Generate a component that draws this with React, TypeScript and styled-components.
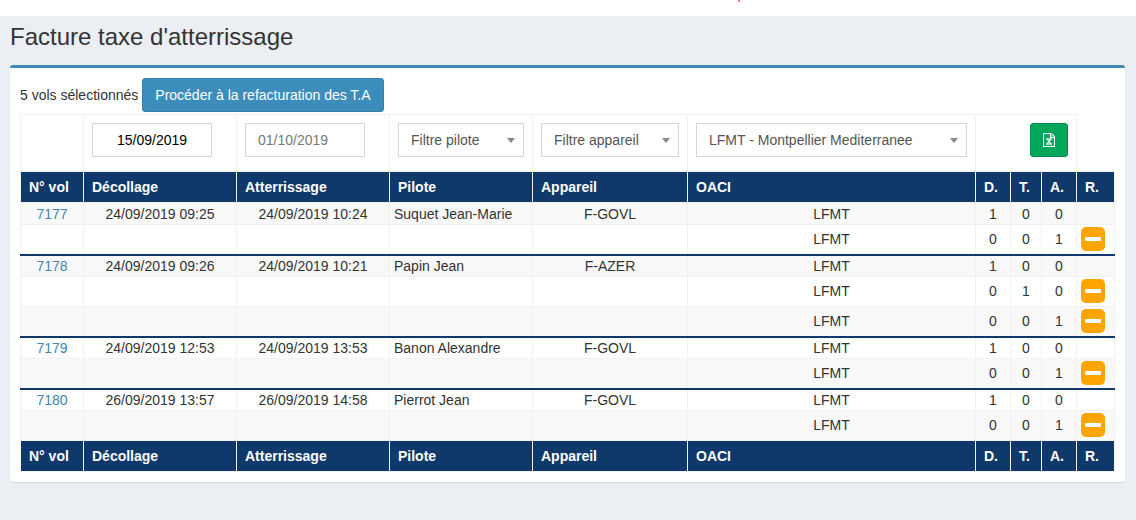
import React from "react";
import styled, { createGlobalStyle } from "styled-components";

const navy = "#0f386b";
const line = "#f1f1f1";

const GlobalStyle = createGlobalStyle`
  *, *::before, *::after { box-sizing: border-box; }
  body {
    margin: 0;
    background: #ebeef3;
    color: #333;
    font: 14px/20px "Liberation Sans", Arial, sans-serif;
  }
`;

const TopBar = styled.header`
  display: flex;
  justify-content: center;
  height: 16px;
  padding-left: 341px;
  background: #fff;
`;

const Mark = styled.span`
  width: 2px;
  height: 2px;
  border-radius: 1px;
  background: #e0525e;
`;

const Content = styled.main`
  padding: 8px 11px 20px 10px;
`;

const Title = styled.h1`
  margin: 0 0 15px;
  font-size: 24px;
  line-height: 26px;
  font-weight: 400;
`;

const Box = styled.section`
  padding: 10px;
  border-top: 3px solid #4089b7;
  border-radius: 3px;
  background: #fff;
  box-shadow: 0 1px 1px rgba(0, 0, 0, 0.1);
`;

const Summary = styled.div`
  display: flex;
  align-items: baseline;
  gap: 4px;
  margin-bottom: 2px;
`;

const Button = styled.button<{ $tone: "primary" | "success" }>`
  height: 34px;
  padding: 0 12px;
  border: 1px solid ${(p) => (p.$tone === "primary" ? "#367fa9" : "#008d4c")};
  border-radius: 3px;
  background: ${(p) => (p.$tone === "primary" ? "#3c8dbc" : "#00a65a")};
  color: #fff;
  font: inherit;
  cursor: pointer;

  svg { display: block; }
`;

const Table = styled.table`
  width: 100%;
  table-layout: fixed;
  border-collapse: collapse;
`;

const Col = styled.col<{ $w?: number }>`
  width: ${(p) => (p.$w ? `${p.$w}px` : "auto")};
`;

const FilterCell = styled.td`
  padding: 8px 8px 14px;
  border: 1px solid ${line};
  text-align: left;
`;

const ActionCell = styled(FilterCell)`
  text-align: right;

  ${Button} { display: inline-block; vertical-align: top; }
`;

const HeadCell = styled.th`
  padding: 5px 8px;
  border: 1px solid ${line};
  background: ${navy};
  color: #fff;
  text-align: left;
  font-weight: 700;
`;

const Cell = styled.td<{ $left?: boolean }>`
  padding: 0 4px;
  border-left: 1px solid ${line};
  border-right: 1px solid ${line};
  text-align: ${(p) => (p.$left ? "left" : "center")};
`;

const IconCell = styled(Cell)``;

const Row = styled.tr<{ $group: boolean }>`
  &:nth-child(odd) { background: #f9f9f9; }
  border-top: ${(p) => (p.$group ? `2px solid ${navy}` : `1px solid ${line}`)};

  ${Cell} { padding-bottom: ${(p) => (p.$group ? 0 : 2)}px; }
  ${IconCell} { padding: ${(p) => (p.$group ? "0 4px" : "2px 4px 3px")}; }

  &:first-child { border-top: 1px solid ${line}; }
  &:first-child td { padding-top: 1px; }
`;

const FlightLink = styled.a`
  color: #4585ac;
  text-decoration: none;
`;

const DateInput = styled.input<{ $centered?: boolean }>`
  display: block;
  width: 120px;
  height: 34px;
  padding: 0 12px;
  border: 1px solid #d2d6de;
  border-radius: 0;
  background: #fff;
  color: #000;
  font: inherit;
  text-align: ${(p) => (p.$centered ? "center" : "left")};

  &::placeholder { color: #777; opacity: 1; }
`;

const SelectWrap = styled.div`
  position: relative;

  svg {
    position: absolute;
    top: 15px;
    right: 9px;
    pointer-events: none;
  }
`;

const Select = styled.select`
  display: block;
  appearance: none;
  width: 100%;
  height: 34px;
  padding: 0 20px 0 12px;
  border: 1px solid #d2d6de;
  border-radius: 0;
  background: #fff;
  color: #555;
  font: inherit;
`;

const RemoveButton = styled.button`
  display: flex;
  align-items: center;
  justify-content: center;
  width: 24px;
  height: 24px;
  padding: 0;
  border: 0;
  border-radius: 5px;
  background: #ffa500;
  cursor: pointer;
`;

const ExcelIcon = () => (
  <svg width="12" height="14" viewBox="0 0 1536 1792" fill="currentColor" stroke="currentColor" aria-hidden="true">
    <path strokeWidth="24" d="M1468 380q28 28 48 76t20 88v1152q0 40-28 68t-68 28h-1344q-40 0-68-28t-28-68v-1600q0-40 28-68t68-28h896q40 0 88 20t76 48zm-444-244v376h376q-10-29-22-41l-313-313q-12-12-41-22zm384 1528v-1024h-416q-40 0-68-28t-28-68v-416h-768v1536h1280z" />
    <path strokeWidth="60" d="M429 1361v106h281v-106h-75l103-161q5-7 10-16.500t7.500-13.500 3.500-4h2q1 4 5 10 2 4 4.500 7.500t6 8 6.500 8.500l107 161h-76v106h291v-106h-68l-192-273 195-282h67v-107h-279v107h74l-103 159q-4 7-10 16.500t-9 13.500l-2 3h-2q-1-4-5-10-6-11-17-23l-106-159h76v-107h-290v107h68l189 272-194 283h-68z" />
  </svg>
);

const MinusIcon = () => (
  <svg width="16" height="4" viewBox="0 0 16 4" aria-hidden="true">
    <rect width="16" height="4" rx="1" fill="#fff" />
  </svg>
);

const Filter = ({ label, options }: { label: string; options: string[] }) => (
  <SelectWrap>
    <Select aria-label={label}>
      {options.map((o) => (
        <option key={o}>{o}</option>
      ))}
    </Select>
    <svg width="8" height="5" viewBox="0 0 8 5" aria-hidden="true">
      <path d="M0 0h8L4 5z" fill="#888" />
    </svg>
  </SelectWrap>
);

const headings = ["N° vol", "Décollage", "Atterrissage", "Pilote", "Appareil", "OACI", "D.", "T.", "A.", "R."];
const widths = [63, 153, 153, 143, 155, undefined, 35, 31, 35, 38];

const HeadingRow = () => (
  <tr>
    {headings.map((h) => (
      <HeadCell key={h} scope="col">{h}</HeadCell>
    ))}
  </tr>
);

interface Flight {
  id: string;
  takeoff: string;
  landing: string;
  pilot: string;
  aircraft: string;
  movements: number[][];
}

const flights: Flight[] = [
  { id: "7177", takeoff: "24/09/2019 09:25", landing: "24/09/2019 10:24", pilot: "Suquet Jean-Marie", aircraft: "F-GOVL", movements: [[1, 0, 0], [0, 0, 1]] },
  { id: "7178", takeoff: "24/09/2019 09:26", landing: "24/09/2019 10:21", pilot: "Papin Jean", aircraft: "F-AZER", movements: [[1, 0, 0], [0, 1, 0], [0, 0, 1]] },
  { id: "7179", takeoff: "24/09/2019 12:53", landing: "24/09/2019 13:53", pilot: "Banon Alexandre", aircraft: "F-GOVL", movements: [[1, 0, 0], [0, 0, 1]] },
  { id: "7180", takeoff: "26/09/2019 13:57", landing: "26/09/2019 14:58", pilot: "Pierrot Jean", aircraft: "F-GOVL", movements: [[1, 0, 0], [0, 0, 1]] },
];

export default function App() {
  return (
    <>
      <GlobalStyle />
      <TopBar><Mark /></TopBar>
      <Content>
        <Title>Facture taxe d'atterrissage</Title>
        <Box>
          <Summary>
            <span>5 vols sélectionnés</span>
            <Button $tone="primary" type="button">Procéder à la refacturation des T.A</Button>
          </Summary>
          <Table>
            <colgroup>
              {widths.map((w, i) => (
                <Col key={i} $w={w} />
              ))}
            </colgroup>
            <thead>
              <tr>
                <FilterCell />
                <FilterCell>
                  <DateInput $centered aria-label="Décollage" defaultValue="15/09/2019" />
                </FilterCell>
                <FilterCell>
                  <DateInput aria-label="Atterrissage" placeholder="01/10/2019" />
                </FilterCell>
                <FilterCell>
                  <Filter label="Pilote" options={["Filtre pilote", ...flights.map((f) => f.pilot)]} />
                </FilterCell>
                <FilterCell>
                  <Filter label="Appareil" options={["Filtre appareil", "F-GOVL", "F-AZER"]} />
                </FilterCell>
                <FilterCell>
                  <Filter label="OACI" options={["LFMT - Montpellier Mediterranee"]} />
                </FilterCell>
                <ActionCell colSpan={3}>
                  <Button $tone="success" type="button" aria-label="Exporter vers Excel">
                    <ExcelIcon />
                  </Button>
                </ActionCell>
              </tr>
              <HeadingRow />
            </thead>
            <tbody>
              {flights.map((f) =>
                f.movements.map((m, i) => (
                  <Row key={`${f.id}-${i}`} $group={i === 0}>
                    <Cell>{i === 0 && <FlightLink href={`#${f.id}`}>{f.id}</FlightLink>}</Cell>
                    <Cell>{i === 0 && f.takeoff}</Cell>
                    <Cell>{i === 0 && f.landing}</Cell>
                    <Cell $left>{i === 0 && f.pilot}</Cell>
                    <Cell>{i === 0 && f.aircraft}</Cell>
                    <Cell>LFMT</Cell>
                    {m.map((n, k) => (
                      <Cell key={k}>{n}</Cell>
                    ))}
                    <IconCell>
                      {i > 0 && (
                        <RemoveButton type="button" aria-label={`Retirer du vol ${f.id}`}>
                          <MinusIcon />
                        </RemoveButton>
                      )}
                    </IconCell>
                  </Row>
                ))
              )}
            </tbody>
            <tfoot>
              <HeadingRow />
            </tfoot>
          </Table>
        </Box>
      </Content>
    </>
  );
}
